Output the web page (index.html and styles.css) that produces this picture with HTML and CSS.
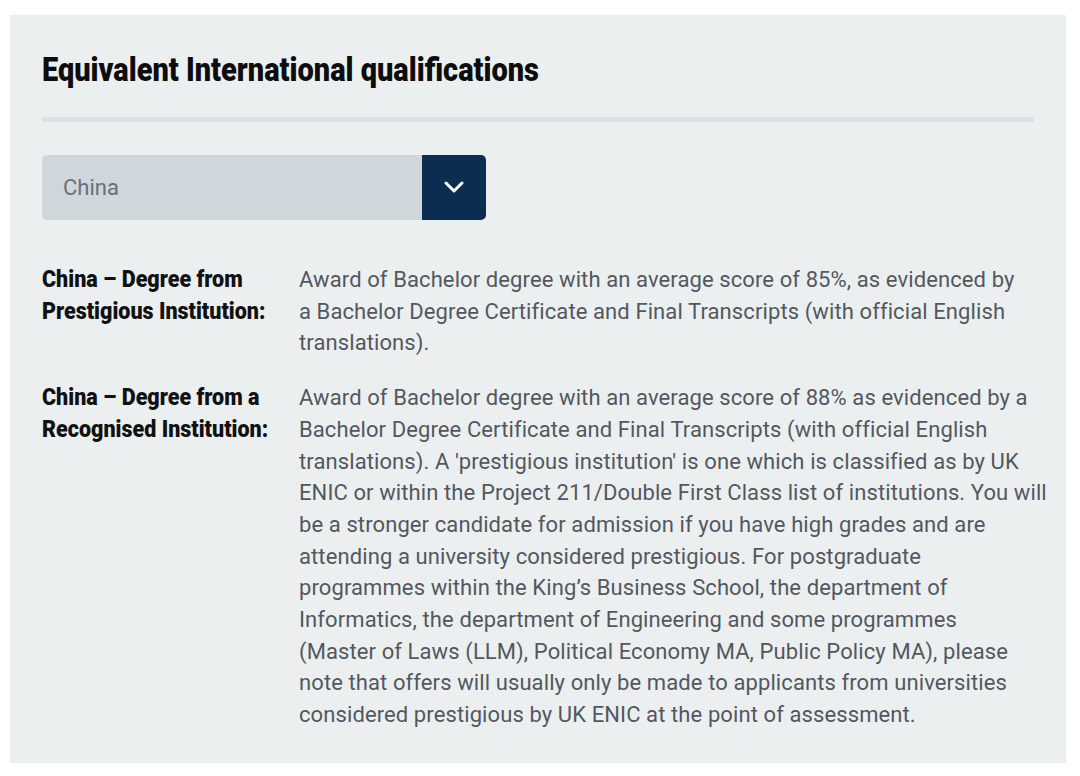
FILE: index.html
```html
<!DOCTYPE html>
<html lang="en">
<head>
<meta charset="utf-8">
<title>Equivalent International qualifications</title>
<link rel="stylesheet" href="styles.css">
</head>
<body>
<section class="panel">
  <h2 class="panel-title"><span class="condensed condensed-title">Equivalent International qualifications</span></h2>
  <div class="select">
    <div class="select-value">China</div>
    <div class="select-button" aria-hidden="true">
      <svg width="22" height="14" viewBox="0 0 22 14"><path d="M3 3 L11 11 L19 3" fill="none" stroke="#ffffff" stroke-width="3" stroke-linecap="round" stroke-linejoin="round"/></svg>
    </div>
  </div>
  <dl class="quals">
    <div class="qual-row">
      <dt class="qual-label"><span class="condensed condensed-label">China – Degree from<br>Prestigious Institution:</span></dt>
      <dd class="qual-text">Award of Bachelor degree with an average score of 85%, as evidenced by<br>a Bachelor Degree Certificate and Final Transcripts (with official English<br>translations).</dd>
    </div>
    <div class="qual-row">
      <dt class="qual-label"><span class="condensed condensed-label">China – Degree from a<br>Recognised Institution:</span></dt>
      <dd class="qual-text">Award of Bachelor degree with an average score of 88% as evidenced by a<br>Bachelor Degree Certificate and Final Transcripts (with official English<br>translations). A 'prestigious institution' is one which is classified as by UK<br>ENIC or within the Project 211/Double First Class list of institutions. You will<br>be a stronger candidate for admission if you have high grades and are<br>attending a university considered prestigious. For postgraduate<br>programmes within the King’s Business School, the department of<br>Informatics, the department of Engineering and some programmes<br>(Master of Laws (LLM), Political Economy MA, Public Policy MA), please<br>note that offers will usually only be made to applicants from universities<br>considered prestigious by UK ENIC at the point of assessment.</dd>
    </div>
  </dl>
</section>
</body>
</html>
```
FILE: styles.css
```css
* { box-sizing: border-box; }
html, body { margin: 0; padding: 0; background: #ffffff; }
body { padding: 15px 14px 13px 10px; }

.panel {
  background: #eceff0;
  padding: 31px 32px 32px 32px;
  min-height: 748px;
}

.condensed {
  display: inline-block;
  white-space: nowrap;
  transform-origin: left top;
}
.condensed-title { transform: scaleX(0.878); }
.condensed-label { transform: scaleX(0.935); }

.panel-title {
  margin: 0;
  padding-bottom: 23px;
  border-bottom: 5px solid #dde2e5;
  font-family: Roboto, "Liberation Sans", sans-serif;
  font-weight: 900;
  font-size: 33px;
  line-height: 48px;
  color: #0d0d0d;
}

.select {
  display: flex;
  width: 444px;
  height: 65px;
  margin-top: 33px;
}
.select-value {
  flex: 1;
  display: flex;
  align-items: center;
  padding-left: 21px;
  background: #cfd6dc;
  border-radius: 5px 0 0 5px;
  font-family: Roboto, "Liberation Sans", sans-serif;
  font-size: 22px;
  color: #697077;
}
.select-button {
  width: 64px;
  display: flex;
  align-items: center;
  justify-content: center;
  padding-bottom: 2px;
  background: #0b2e50;
  border-radius: 0 5px 5px 0;
}

.quals { margin: 44px 0 0 0; }
.qual-row {
  display: grid;
  grid-template-columns: 257px 1fr;
  margin-bottom: 23px;
}
.qual-row:last-child { margin-bottom: 0; }
.qual-label {
  margin: 0;
  font-family: Roboto, "Liberation Sans", sans-serif;
  font-weight: 900;
  font-size: 23px;
  line-height: 31.7px;
  color: #111111;
}
.qual-text {
  margin: 0;
  white-space: nowrap;
  font-family: Roboto, "Liberation Sans", sans-serif;
  font-size: 22px;
  letter-spacing: 0.1px;
  line-height: 31.7px;
  color: #52585e;
}
```
